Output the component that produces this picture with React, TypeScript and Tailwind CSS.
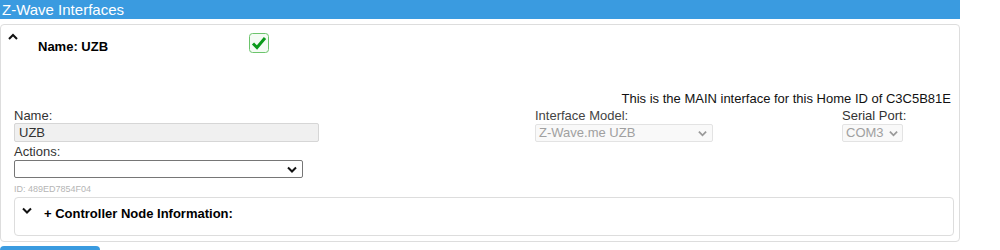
import React from 'react';

const ChevronUp = () => (
  <svg width="10" height="7" viewBox="0 0 10 7" className="block">
    <path d="M1 6 L5 2 L9 6" fill="none" stroke="#111" strokeWidth="2" />
  </svg>
);

const ChevronDown = ({ color = '#111', w = 10 }: { color?: string; w?: number }) => (
  <svg width={w} height="7" viewBox="0 0 10 7" className="block">
    <path d="M1 1.5 L5 5.5 L9 1.5" fill="none" stroke={color} strokeWidth="2" />
  </svg>
);

const GreenCheck = () => (
  <svg width="20" height="20" viewBox="0 0 20 20" className="block">
    <rect x="0.5" y="0.5" width="19" height="19" rx="3" fill="#f4fbf4" stroke="#6cc46c" />
    <path d="M4 10.5 L8 14.5 L16 5" fill="none" stroke="#0a9a1a" strokeWidth="3" />
  </svg>
);

const App = () => {
  return (
    <div className="w-[1000px] h-[250px] overflow-hidden bg-white font-['Liberation_Sans',Arial,sans-serif] text-[#222]">
      <div className="w-[960px] h-[19px] bg-[#3a9be0] text-white text-[15px] leading-[19px] pl-[2px]">
        Z-Wave Interfaces
      </div>

      <div className="mt-[5px] w-[960px] h-[218px] border border-[#dddddd] rounded-[4px] flex flex-col">
        {/* header row */}
        <div className="flex items-start pt-[8px]">
          <div className="w-[37px] pl-[7px]">
            <ChevronUp />
          </div>
          <div className="w-[211px] mt-[6px] text-[13px] leading-[15px] font-bold text-black">Name: UZB</div>
          <GreenCheck />
        </div>

        <div className="mt-[37px] pr-[8px] text-right text-[13px] leading-[15px] text-[#111]">
          This is the MAIN interface for this Home ID of C3C5B81E
        </div>

        {/* fields */}
        <div className="flex pl-[13px] mt-[2px]">
          <div className="w-[521px] flex flex-col">
            <div className="text-[13px] leading-[15px] text-[#333]">Name:</div>
            <div className="w-[305px] h-[19px] bg-[#f0f0f0] border border-[#d6d6d6] rounded-[2px] text-[13px] leading-[17px] pl-[4px] text-[#333]">
              UZB
            </div>
            <div className="mt-[2px] text-[13px] leading-[15px] text-[#333]">Actions:</div>
            <div className="mt-[1px] w-[289px] h-[18px] border border-[#767676] rounded-[2px] bg-white flex items-center justify-end pr-[5px]">
              <ChevronDown />
            </div>
            <div className="mt-[6px] text-[9px] leading-[11px] text-[#b5b5b5]">ID: 489ED7854F04</div>
          </div>
          <div className="w-[307px] flex flex-col">
            <div className="text-[13px] leading-[15px] text-[#444]">Interface Model:</div>
            <div className="mt-[1px] w-[178px] h-[18px] bg-[#f9f9f9] border border-[#e3e3e3] rounded-[2px] flex items-center justify-between pl-[3px] pr-[5px] text-[13px] text-[#a0a0a0]">
              <span>Z-Wave.me UZB</span>
              <ChevronDown color="#999" w={9} />
            </div>
          </div>
          <div className="flex flex-col">
            <div className="text-[13px] leading-[15px] text-[#333]">Serial Port:</div>
            <div className="mt-[1px] w-[61px] h-[18px] bg-[#f9f9f9] border border-[#e3e3e3] rounded-[2px] flex items-center justify-between pl-[3px] pr-[4px] text-[13px] text-[#a0a0a0]">
              <span>COM3</span>
              <ChevronDown color="#999" w={9} />
            </div>
          </div>
        </div>

        {/* controller node panel */}
        <div className="mt-[2px] ml-[13px] w-[940px] h-[39px] border border-[#dddddd] rounded-[4px] flex items-start">
          <div className="w-[29px] pl-[7px] pt-[9px]">
            <ChevronDown />
          </div>
          <div className="mt-[8px] text-[13px] leading-[15px] font-bold text-black">+ Controller Node Information:</div>
        </div>
      </div>

      <div className="mt-[4px] w-[100px] h-[8px] bg-[#3a9be0] rounded-t-[4px]" />
    </div>
  );
};

export default App;
